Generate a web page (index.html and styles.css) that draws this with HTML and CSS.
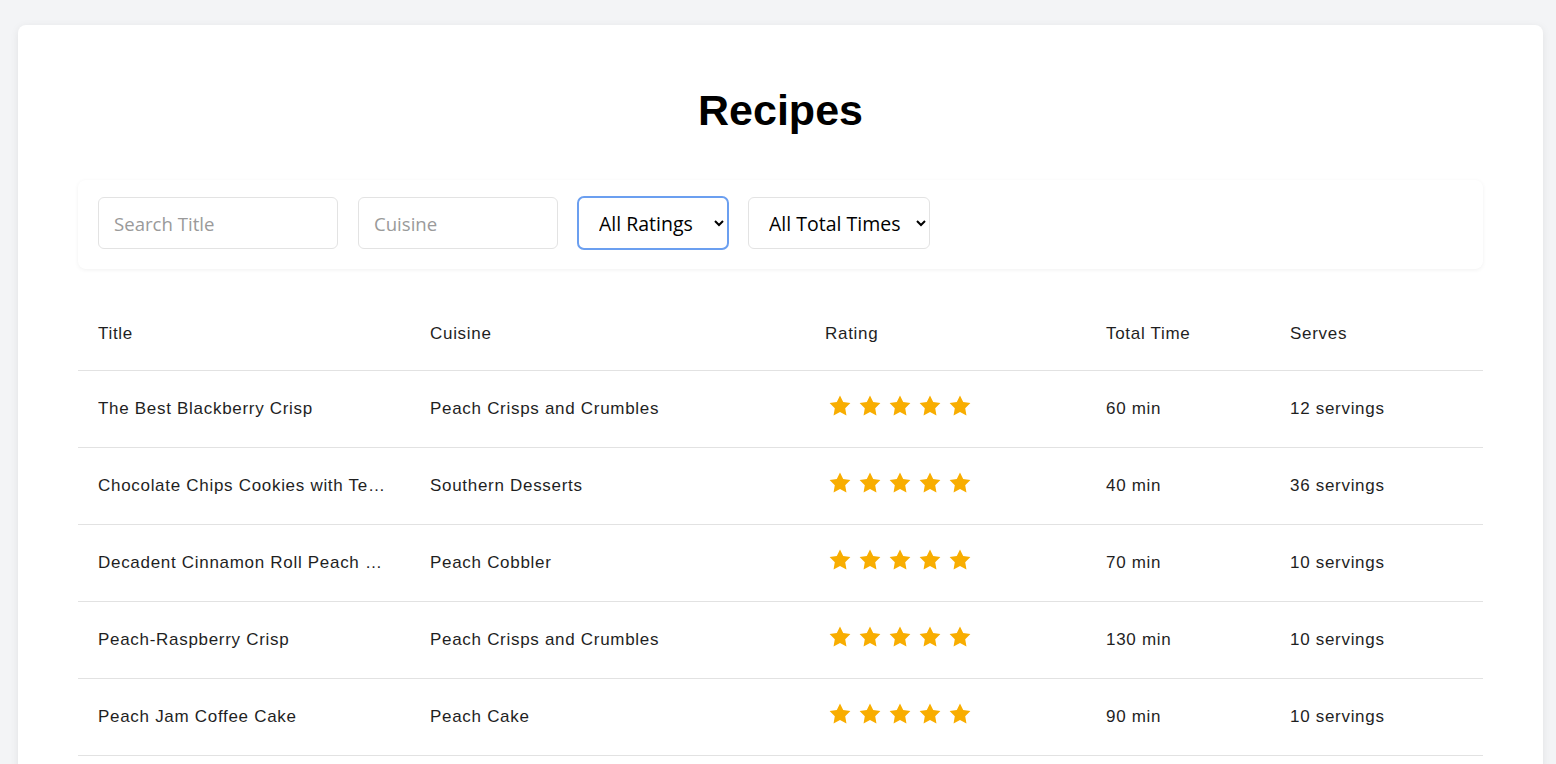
FILE: index.html
```html
<!DOCTYPE html>
<html lang="en">
<head>
<meta charset="utf-8">
<title>Recipes</title>
<link rel="stylesheet" href="styles.css">
</head>
<body>
<svg width="0" height="0" class="defs">
  <defs>
    <symbol id="star" viewBox="0 0 24 24"><path d="M12 1.5l3.2 6.6 7.2 1-5.2 5.1 1.25 7.2L12 18l-6.45 3.4 1.25-7.2L1.6 9.1l7.2-1z"/></symbol>
  </defs>
</svg>
<main class="card">
  <h1 class="page-title">Recipes</h1>
  <div class="filters">
    <input class="field field-title" type="text" placeholder="Search Title">
    <input class="field field-cuisine" type="text" placeholder="Cuisine">
    <select class="field select select-rating focused">
      <option>All Ratings</option>
    </select>
    <select class="field select select-time">
      <option>All Total Times</option>
    </select>
  </div>
  <table class="recipes">
    <colgroup>
      <col class="c-title"><col class="c-cuisine"><col class="c-rating"><col class="c-time"><col class="c-serves">
    </colgroup>
    <thead>
      <tr><th>Title</th><th>Cuisine</th><th>Rating</th><th>Total Time</th><th>Serves</th></tr>
    </thead>
    <tbody>
      <tr>
        <td><div class="trunc">The Best Blackberry Crisp</div></td>
        <td>Peach Crisps and Crumbles</td>
        <td><div class="stars"><svg><use href="#star"/></svg><svg><use href="#star"/></svg><svg><use href="#star"/></svg><svg><use href="#star"/></svg><svg><use href="#star"/></svg></div></td>
        <td>60 min</td>
        <td>12 servings</td>
      </tr>
      <tr>
        <td><div class="trunc">Chocolate Chips Cookies with Texas Pecans</div></td>
        <td>Southern Desserts</td>
        <td><div class="stars"><svg><use href="#star"/></svg><svg><use href="#star"/></svg><svg><use href="#star"/></svg><svg><use href="#star"/></svg><svg><use href="#star"/></svg></div></td>
        <td>40 min</td>
        <td>36 servings</td>
      </tr>
      <tr>
        <td><div class="trunc">Decadent Cinnamon Roll Peach Cobbler</div></td>
        <td>Peach Cobbler</td>
        <td><div class="stars"><svg><use href="#star"/></svg><svg><use href="#star"/></svg><svg><use href="#star"/></svg><svg><use href="#star"/></svg><svg><use href="#star"/></svg></div></td>
        <td>70 min</td>
        <td>10 servings</td>
      </tr>
      <tr>
        <td><div class="trunc">Peach-Raspberry Crisp</div></td>
        <td>Peach Crisps and Crumbles</td>
        <td><div class="stars"><svg><use href="#star"/></svg><svg><use href="#star"/></svg><svg><use href="#star"/></svg><svg><use href="#star"/></svg><svg><use href="#star"/></svg></div></td>
        <td>130 min</td>
        <td>10 servings</td>
      </tr>
      <tr>
        <td><div class="trunc">Peach Jam Coffee Cake</div></td>
        <td>Peach Cake</td>
        <td><div class="stars"><svg><use href="#star"/></svg><svg><use href="#star"/></svg><svg><use href="#star"/></svg><svg><use href="#star"/></svg><svg><use href="#star"/></svg></div></td>
        <td>90 min</td>
        <td>10 servings</td>
      </tr>
      <tr>
        <td><div class="trunc">Southern Peach Cobbler</div></td>
        <td>Peach Cobbler</td>
        <td><div class="stars"><svg><use href="#star"/></svg><svg><use href="#star"/></svg><svg><use href="#star"/></svg><svg><use href="#star"/></svg><svg><use href="#star"/></svg></div></td>
        <td>60 min</td>
        <td>8 servings</td>
      </tr>
    </tbody>
  </table>
</main>
</body>
</html>
```

FILE: styles.css
```css
html, body {
  margin: 0;
  padding: 0;
  background: #f3f4f6;
  font-family: "Liberation Sans", Arial, sans-serif;
  color: #1f1f1f;
}
.defs { position: absolute; width: 0; height: 0; }

.card {
  margin: 25px 13px 0 18px;
  background: #ffffff;
  border-radius: 8px;
  box-shadow: 0 2px 8px rgba(0, 0, 0, 0.08);
  padding: 61px 60px 40px;
}

.page-title {
  margin: 0;
  text-align: center;
  font-size: 43px;
  font-weight: bold;
  color: #000;
  line-height: 49px;
}

.filters {
  margin-top: 45px;
  display: flex;
  align-items: center;
  gap: 20px;
  padding: 16px 20px 19px;
  border-radius: 8px;
  box-shadow: 0 1px 4px rgba(0, 0, 0, 0.06);
  background: #fff;
}

.field {
  box-sizing: border-box;
  height: 52px;
  border: 1px solid #e3e3e3;
  border-radius: 6px;
  background: #fff;
  font-family: "Open Sans", "Noto Sans", sans-serif;
  font-size: 18.6px;
  color: #000;
  padding: 0 15px;
  outline: none;
}
.field::placeholder { color: #9a9a9a; }
.field-title { width: 240px; }
.field-cuisine { width: 200px; }
.select {
  font-size: 19.5px;
  padding: 0 8px 0 16px;
}
.select-rating { width: 152px; margin-left: -1px; }
.select-time { width: 182px; margin-left: -1px; }
.select.focused {
  border: 2px solid #6b9ff0;
  height: 54px;
  padding-left: 16px;
  border-radius: 7px;
}

.recipes {
  margin-top: 31px;
  width: 100%;
  border-collapse: collapse;
  table-layout: fixed;
  font-size: 17px;
  letter-spacing: 0.7px;
}
.c-title { width: 332px; }
.c-cuisine { width: 395px; }
.c-rating { width: 281px; }
.c-time { width: 184px; }
.c-serves { width: 213px; }

.recipes th {
  text-align: left;
  font-weight: normal;
  padding: 23px 20px 25px;
  border-bottom: 1px solid #e2e2e2;
  line-height: 22px;
}
.recipes td {
  padding: 24px 20px;
  border-bottom: 1px solid #e2e2e2;
  vertical-align: middle;
  line-height: 22px;
  height: 28px;
}
.trunc {
  white-space: nowrap;
  overflow: hidden;
  text-overflow: ellipsis;
}

.stars {
  display: flex;
  gap: 6px;
  margin-top: -7px;
  padding-left: 3px;
}
.stars svg {
  width: 24px;
  height: 24px;
  fill: #f8ad00;
}
```
